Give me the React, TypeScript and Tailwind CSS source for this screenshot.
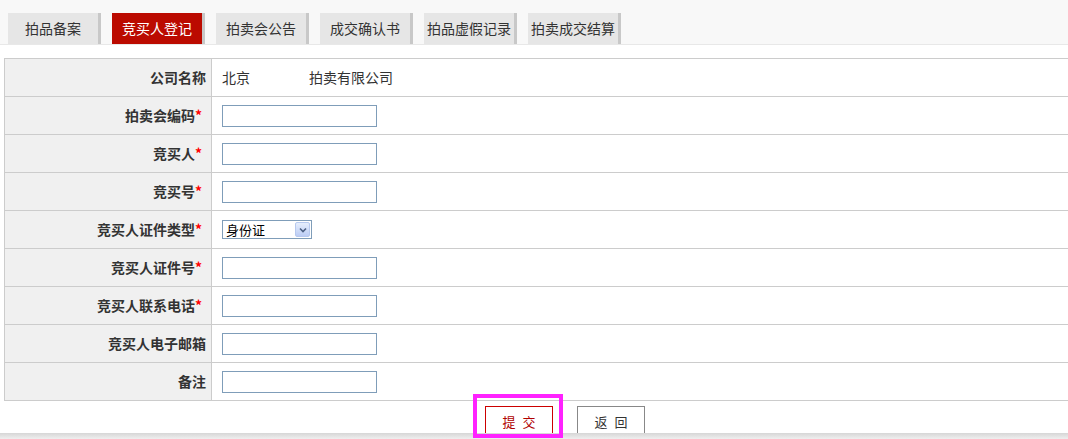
const tabs = ["拍品备案", "竞买人登记", "拍卖会公告", "成交确认书", "拍品虚假记录", "拍卖成交结算"];

type Row = { label: string; required?: boolean; kind: "text" | "input" | "select" };

const rows: Row[] = [
  { label: "公司名称", kind: "text" },
  { label: "拍卖会编码", required: true, kind: "input" },
  { label: "竞买人", required: true, kind: "input" },
  { label: "竞买号", required: true, kind: "input" },
  { label: "竞买人证件类型", required: true, kind: "select" },
  { label: "竞买人证件号", required: true, kind: "input" },
  { label: "竞买人联系电话", required: true, kind: "input" },
  { label: "竞买人电子邮箱", kind: "input" },
  { label: "备注", kind: "input" },
];

function SelectBox() {
  return (
    <div className="flex h-[19px] w-[90px] items-center border border-[#7f9db9] bg-white">
      <span className="flex-1 pl-[3px] text-[13px] leading-none text-black">身份证</span>
      <div className="mr-[1px] flex h-[15px] w-[15px] items-center justify-center rounded-[2px] border border-[#b7c9ef] bg-gradient-to-b from-[#e6eefc] to-[#bccdf5]">
        <svg width="8" height="6" viewBox="0 0 8 6">
          <path d="M1 1.5 L4 4.5 L7 1.5" fill="none" stroke="#4d6185" strokeWidth="1.6" />
        </svg>
      </div>
    </div>
  );
}

export default function App() {
  return (
    <div
      className="relative h-[439px] w-[1068px] overflow-hidden bg-white text-[#333]"
      style={{ fontFamily: '"Noto Sans CJK SC", "Noto Sans", sans-serif' }}
    >
      {/* tab bar */}
      <div className="flex h-[45px] items-end gap-[11px] border-b border-[#e8e8e8] bg-[#f8f8f8] pl-[8px]">
        {tabs.map((t, i) => (
          <div
            key={t}
            className={
              i === 1
                ? "flex h-[31px] w-[93px] items-center justify-center border-r-[3px] border-[#c8c8c8] bg-[#bb0a00] text-[14px] text-white"
                : "flex h-[31px] w-[93px] items-center justify-center border-r-[3px] border-[#c8c8c8] bg-[#e6e6e6] text-[14px] text-[#333]"
            }
          >
            {t}
          </div>
        ))}
      </div>

      {/* form table */}
      <div className="ml-[4px] mt-[13px] w-[1070px] border-l border-t border-[#cccccc]">
        {rows.map((r) => (
          <div key={r.label} className="flex h-[38px] border-b border-[#cccccc]">
            <div className="flex w-[207px] items-center justify-end border-r border-[#cccccc] bg-[#f0f0f0] pr-[5px] text-[14px] font-bold text-[#333]">
              {r.label}
              {r.required && <span className="pr-[4px] text-[#ff0000]">*</span>}
            </div>
            <div className="flex flex-1 items-center pl-[10px]">
              {r.kind === "text" && (
                <span className="text-[14px] text-[#333]">
                  北京<span className="inline-block w-[59px]" />拍卖有限公司
                </span>
              )}
              {r.kind === "input" && <div className="h-[22px] w-[155px] border border-[#7f9db9] bg-white" />}
              {r.kind === "select" && <SelectBox />}
            </div>
          </div>
        ))}
      </div>

      {/* buttons */}
      <div className="mt-[5px] flex h-[27px] items-start gap-[24px] overflow-hidden pl-[485px]">
        <div className="flex h-[32px] w-[68px] items-center justify-center border border-[#cc0000] bg-white text-[13px] tracking-[7px] text-[#b00000]">
          <span className="pl-[7px]">提交</span>
        </div>
        <div className="flex h-[32px] w-[68px] items-center justify-center border border-[#888888] bg-white text-[13px] tracking-[7px] text-[#333]">
          <span className="pl-[7px]">返回</span>
        </div>
      </div>
      <div className="h-[6px] bg-gradient-to-b from-[#d6d6d6] to-[#efefef]" />

      {/* highlight overlay */}
      <div className="absolute left-[473px] top-[394px] h-[44px] w-[90px] border-[4px] border-[#ff22ff]" />
    </div>
  );
}
